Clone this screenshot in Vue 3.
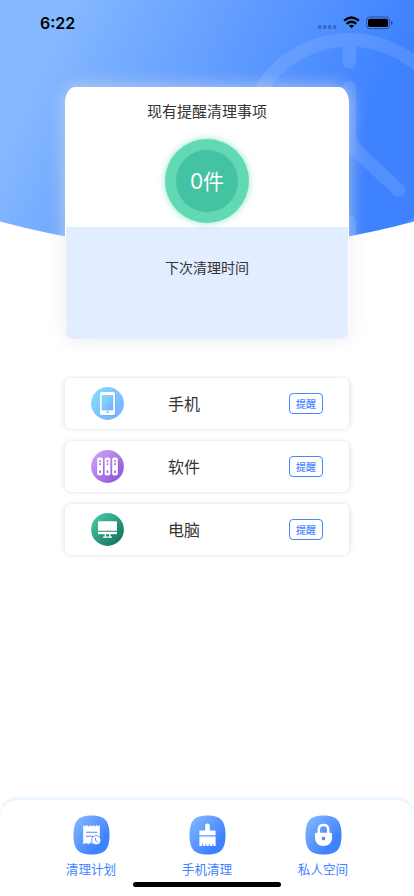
<script setup>
const devices = [
  { name: '手机', icon: 'phone' },
  { name: '软件', icon: 'software' },
  { name: '电脑', icon: 'computer' },
]
const tabs = [
  { name: '清理计划', icon: 'plan' },
  { name: '手机清理', icon: 'brush' },
  { name: '私人空间', icon: 'lock' },
]
</script>

<template>
  <div class="page">
    <svg class="backdrop" width="414" height="252" viewBox="0 0 414 252">
      <defs>
        <linearGradient id="sky" gradientUnits="userSpaceOnUse" x1="45" y1="55" x2="335" y2="190">
          <stop offset="0" stop-color="#85b8ff" />
          <stop offset="1" stop-color="#3e82ff" />
        </linearGradient>
        <clipPath id="curve"><path d="M0 0H414V221.5Q207 277.5 0 221.5Z" /></clipPath>
      </defs>
      <g clip-path="url(#curve)">
        <rect width="414" height="252" fill="url(#sky)" />
        <g fill="none" stroke="#fff" stroke-width="13.5" stroke-linecap="round" opacity=".11">
          <path d="M349.5 39.8A104.2 104.2 0 1 0 349.5 248.2A104.2 104.2 0 1 0 349.5 39.8ZM349.5 40V61.5M349.5 88V144L398.5 190M349.5 222V248" />
        </g>
      </g>
    </svg>

    <header class="status">
      <span class="time">6:22</span>
      <svg width="76" height="16" viewBox="0 0 76 16">
        <g fill="#000" opacity=".25">
          <rect x="1" y="11" width="3.4" height="4" rx="1.2" />
          <rect x="6" y="11" width="3.4" height="4" rx="1.2" />
          <rect x="11" y="11" width="3.4" height="4" rx="1.2" />
          <rect x="16" y="11" width="3.4" height="4" rx="1.2" />
        </g>
        <g fill="none" stroke="#000" stroke-width="2.4">
          <path d="M27.1 6.6Q34.5 .2 41.9 6.6" />
          <path d="M29.7 9.8Q34.5 5.6 39.3 9.8" />
        </g>
        <path d="M31.9 11.7Q34.5 9.6 37.1 11.7L34.5 14.3Z" />
        <rect x="49.6" y="2.9" width="22.9" height="11.8" rx="3.4" fill="none" stroke="#000" stroke-opacity=".4" />
        <rect x="51" y="4.7" width="20" height="8.4" rx="1.8" />
        <path d="M74 7Q75.6 7.4 75.6 8.9T74 10.8Z" opacity=".5" />
      </svg>
    </header>

    <section class="summary">
      <div class="summary-top">
        <h1>现有提醒清理事项</h1>
        <div class="ring"><div class="disc">0件</div></div>
      </div>
      <div class="summary-bottom">下次清理时间</div>
    </section>

    <main class="devices">
      <div v-for="d in devices" :key="d.name" class="device">
        <svg width="33" height="33" viewBox="0 0 33 33">
          <template v-if="d.icon === 'phone'">
            <linearGradient id="phoneFill" x1="0" y1="0" x2="1" y2="1">
              <stop offset=".1" stop-color="#82dbff" /><stop offset=".9" stop-color="#7bb0ff" />
            </linearGradient>
            <circle cx="16.5" cy="16.5" r="16.4" fill="url(#phoneFill)" />
            <rect x="10" y="6" width="15" height="23" rx="1.8" fill="#4d91df" opacity=".3" />
            <rect x="9" y="5" width="15" height="23" rx="1.7" fill="#fff" />
            <rect x="11" y="8.3" width="11" height="14.8" fill="url(#phoneFill)" stroke="#76b4f2" stroke-width=".4" />
            <rect x="15.7" y="24.3" width="1.8" height="1.8" rx=".3" fill="#66a7ee" />
          </template>
          <template v-else-if="d.icon === 'software'">
            <linearGradient id="softwareFill" x1="0" y1="0" x2="1" y2="1">
              <stop offset=".1" stop-color="#c9a2f6" /><stop offset=".9" stop-color="#9254dc" />
            </linearGradient>
            <circle cx="16.5" cy="16.5" r="16.4" fill="url(#softwareFill)" />
            <g v-for="x in [6.2, 13.7, 21.2]" :key="x">
              <rect :x="x + .6" y="8.6" width="5.8" height="17.8" rx="1.7" fill="#7136b8" opacity=".3" />
              <rect :x="x" y="7.6" width="5.7" height="17.8" rx="1.6" fill="#fff" />
              <rect :x="x + 2" y="10.3" width="1.7" height="1.7" fill="#a66bdf" />
              <rect :x="x + 2" y="13.2" width="1.7" height="1.8" fill="#a66bdf" />
              <rect :x="x + 2" y="20.2" width="1.7" height="3" rx=".7" fill="#a66bdf" />
            </g>
          </template>
          <template v-else>
            <linearGradient id="computerFill" x1="0" y1="0" x2="1" y2="1">
              <stop offset=".1" stop-color="#45c6a7" /><stop offset=".9" stop-color="#14745d" />
            </linearGradient>
            <circle cx="16.5" cy="16.5" r="16.4" fill="url(#computerFill)" />
            <rect x="7.7" y="9" width="19" height="13.2" rx=".8" fill="#075a44" opacity=".3" />
            <path d="M7.6 8.2H25.4Q26 8.2 26 8.8V17.8H7V8.8Q7 8.2 7.6 8.2ZM7 18.7H26V20.6Q26 21.2 25.4 21.2H7.6Q7 21.2 7 20.6ZM13.7 21.2H15V23.5H18.2V21.2H19.5V23.5H21V24.8H12V23.5H13.7Z" fill="#fff" />
          </template>
        </svg>
        <span class="device-name">{{ d.name }}</span>
        <button class="remind">提醒</button>
      </div>
    </main>

    <nav class="tabbar">
      <div v-for="t in tabs" :key="t.name" class="tab">
        <svg width="37" height="40" viewBox="0 0 37 40">
          <linearGradient :id="t.icon + 'Tile'" x1="0" y1="0" x2="1" y2="1">
            <stop offset=".06" stop-color="#82b6ff" /><stop offset=".74" stop-color="#3e82ff" />
          </linearGradient>
          <path d="M18.5 .5C31 .5 36.5 5 36.5 20S31 39.5 18.5 39.5S.5 35 .5 20S6 .5 18.5 .5Z" :fill="`url(#${t.icon}Tile)`" />
          <template v-if="t.icon === 'plan'">
            <path d="M10.2 10.1L12 11.2L14 10.1L15 11.5H16L17.2 10.1L19 11.5L20.3 10.1L22 11.5L23.6 10.1L25 11.2L26.8 10.1V29H25L22 28L20 29L17.4 27.5L15.5 29.3L13.5 28L10.2 29.3Z" fill="#fff" />
            <path d="M13 17.2H24.4M13 21.2H20" stroke="#4f8eff" stroke-width="1.1" />
            <circle cx="23.2" cy="25.2" r="4.6" fill="#fff" stroke="#4587ff" stroke-width=".8" />
            <path d="M22.6 22.7V25.4L24.6 27.3" fill="none" stroke="#4587ff" stroke-width="1" />
          </template>
          <template v-else-if="t.icon === 'brush'">
            <path d="M16.2 10Q16.2 8.5 18.5 8.5T20.8 10V15.5H26Q26.6 15.5 26.6 16.1V20.2H10.4V16.1Q10.4 15.5 11 15.5H16.2ZM10.4 21.4H26.6V31H24.3V28.8H23.4V31H20.8V28.8H19.9V31H17.4V28.8H16.5V31H14V28.8H13.1V31H10.4Z" fill="#fff" />
          </template>
          <template v-else>
            <path d="M13.8 18.5V14.5Q13.8 10 18.5 10T23.2 14.5V18.5" fill="none" stroke="#fff" stroke-width="2.5" />
            <path d="M11.2 17.8H25.8Q27 17.8 27 19V22.5C27 27.5 23.5 31 18.5 31S10 27.5 10 22.5V19Q10 17.8 11.2 17.8Z" fill="#fff" />
            <circle cx="18.5" cy="23.6" r="1.8" fill="#4485ff" />
          </template>
        </svg>
        <span>{{ t.name }}</span>
      </div>
      <div class="home-indicator"></div>
    </nav>
  </div>
</template>

<style>
body { background: #fff; }
</style>

<style scoped>
.page {
  position: relative;
  box-sizing: border-box;
  width: 414px;
  height: 896px;
  overflow: hidden;
  display: flex;
  flex-direction: column;
  isolation: isolate;
  font-family: Inter, "Noto Sans CJK SC", sans-serif;
  color: #333;
}
.backdrop { position: absolute; inset: 0 auto auto 0; z-index: -1; }
.status {
  box-sizing: border-box;
  height: 87px;
  padding: 14px 21px 0 40px;
  display: flex;
  justify-content: space-between;
  align-items: flex-start;
  color: #000;
}
.time { font-size: 16px; font-weight: 600; line-height: 18px; }
.summary {
  box-sizing: border-box;
  width: 284px;
  height: 252px;
  margin: 0 65px;
  padding: 0 1px;
  border-radius: 10px 10px 8px 8px / 16px 16px 14px 14px;
  background: #fff;
  box-shadow: 0 0 18px rgba(225, 225, 225, .7);
}
.summary-top { height: 140px; display: flex; flex-direction: column; align-items: center; }
h1 { margin: 12px 0 16px; font: 400 15px/24px "Noto Sans CJK SC", sans-serif; }
.ring {
  box-sizing: border-box;
  width: 84px;
  height: 84px;
  padding: 10px;
  border-radius: 50%;
  background: #62d9b5;
  box-shadow: 0 0 7px rgba(67, 211, 164, .6);
}
.disc {
  box-sizing: border-box;
  height: 64px;
  padding-bottom: 2px;
  border: 1px solid #70d0b5;
  border-radius: 50%;
  background: #43c3a2;
  display: flex;
  align-items: center;
  justify-content: center;
  color: #fff;
  font-size: 21px;
}
.summary-bottom {
  height: 112px;
  box-sizing: border-box;
  padding-top: 29px;
  border-radius: 0 0 7px 7px;
  background: #e2edff;
  text-align: center;
  font: 400 14px/22px "Noto Sans CJK SC", sans-serif;
}
.devices { margin: 39px 65px 0; display: grid; gap: 12px; }
.device {
  box-sizing: border-box;
  height: 51px;
  padding: 0 26px;
  display: flex;
  align-items: center;
  border-radius: 6px;
  background: #fff;
  box-shadow: 0 0 4px rgba(0, 0, 0, .11), -5px 0 7px -3px rgba(0, 0, 0, .05), 5px 0 7px -3px rgba(0, 0, 0, .05);
}
.device-name { margin-left: 44px; padding-bottom: 2px; font: 400 16px/24px "Noto Sans CJK SC", sans-serif; }
.remind {
  box-sizing: border-box;
  width: 34px;
  height: 21px;
  margin-left: auto;
  padding: 0;
  border: 1px solid #4788ff;
  border-radius: 4px;
  background: #fff;
  color: #4788ff;
  font: 500 10px/18px "Noto Sans CJK SC", sans-serif;
}
.tabbar {
  box-sizing: border-box;
  height: 98px;
  margin-top: auto;
  padding: 15px 33px 0;
  display: grid;
  grid-template-columns: repeat(3, 116px);
  grid-template-rows: 67px 5px;
  border-top: 2px solid #eaf3ff;
  border-radius: 18px 18px 0 0;
  background: #fff;
  box-shadow: 0 -1px 2px rgba(225, 238, 255, .6);
}
.tab { display: flex; flex-direction: column; align-items: center; }
.tab span { margin-top: 4px; color: #3e82ff; font: 400 12.6px/20px "Noto Sans CJK SC", sans-serif; }
.home-indicator {
  grid-column: 1 / -1;
  justify-self: center;
  width: 148px;
  height: 5px;
  border-radius: 3px;
  background: #000;
}
</style>
